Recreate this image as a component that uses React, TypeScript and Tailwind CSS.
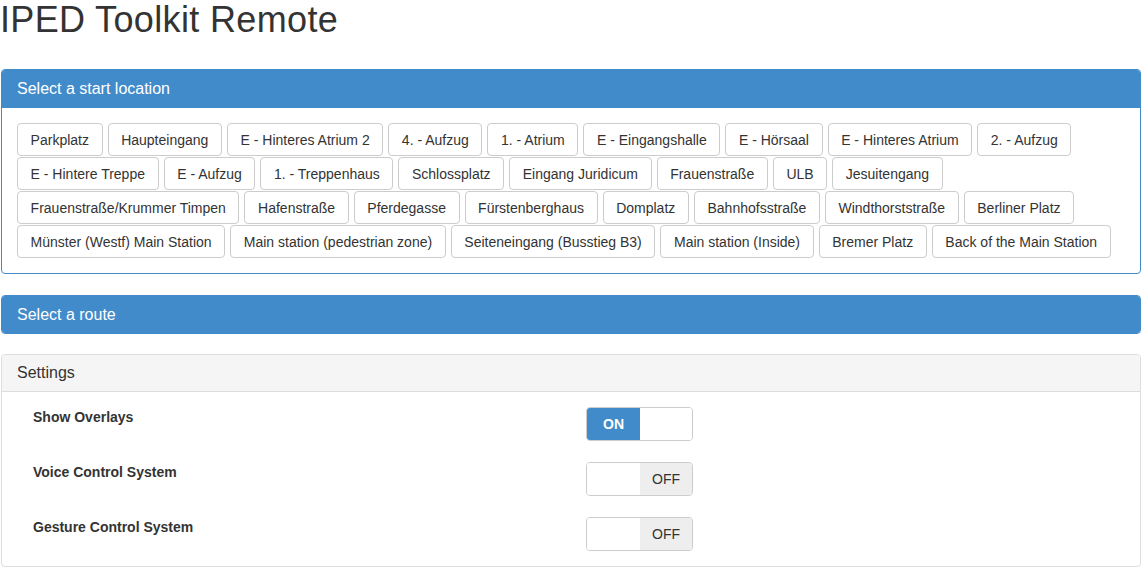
import React from "react";

const locations = [
  "Parkplatz",
  "Haupteingang",
  "E - Hinteres Atrium 2",
  "4. - Aufzug",
  "1. - Atrium",
  "E - Eingangshalle",
  "E - Hörsaal",
  "E - Hinteres Atrium",
  "2. - Aufzug",
  "E - Hintere Treppe",
  "E - Aufzug",
  "1. - Treppenhaus",
  "Schlossplatz",
  "Eingang Juridicum",
  "Frauenstraße",
  "ULB",
  "Jesuitengang",
  "Frauenstraße/Krummer Timpen",
  "Hafenstraße",
  "Pferdegasse",
  "Fürstenberghaus",
  "Domplatz",
  "Bahnhofsstraße",
  "Windthorststraße",
  "Berliner Platz",
  "Münster (Westf) Main Station",
  "Main station (pedestrian zone)",
  "Seiteneingang (Busstieg B3)",
  "Main station (Inside)",
  "Bremer Platz",
  "Back of the Main Station",
];

function Toggle({ on }: { on: boolean }) {
  return (
    <div className="flex w-[107px] h-[34px] border border-[#ccc] rounded-[4px] overflow-hidden bg-white text-[14px] leading-[20px]">
      {on ? (
        <>
          <span className="w-[53px] flex items-center justify-center bg-[#428bca] text-white font-bold">
            ON
          </span>
          <span className="flex-1 bg-white" />
        </>
      ) : (
        <>
          <span className="w-[53px] bg-white" />
          <span className="flex-1 flex items-center justify-center bg-[#eeeeee] text-[#333]">
            OFF
          </span>
        </>
      )}
    </div>
  );
}

export default function App() {
  const settings: [string, boolean][] = [
    ["Show Overlays", true],
    ["Voice Control System", false],
    ["Gesture Control System", false],
  ];
  return (
    <div className="w-[1144px] min-h-[573px] bg-white text-[#333] font-['Liberation_Sans',Arial,sans-serif]">
      <h1 className="text-[36px] leading-[40px] tracking-[0.35px] font-normal text-[#333] m-0">
        IPED Toolkit Remote
      </h1>

      <div className="ml-[1px] w-[1140px] mt-[29px] flex flex-col">
        {/* Start location panel */}
        <div className="border border-[#428bca] rounded-[4px] overflow-hidden">
          <div className="h-[38px] bg-[#428bca] border-b border-[#428bca] px-[15px] flex items-center text-white text-[16px] leading-[18px]">
            Select a start location
          </div>
          <div className="p-[15px] flex flex-wrap gap-x-[5px] gap-y-[1px]">
            {locations.map((l) => (
              <button
                key={l}
                className="h-[33px] px-[12.6px] border border-[#ccc] rounded-[4px] bg-white text-[14px] leading-[20px] text-[#333] whitespace-nowrap"
              >
                {l}
              </button>
            ))}
          </div>
        </div>

        {/* Route panel */}
        <div className="mt-[21px] border border-[#428bca] rounded-[4px] overflow-hidden">
          <div className="h-[37px] bg-[#428bca] px-[15px] flex items-center text-white text-[16px] leading-[18px]">
            Select a route
          </div>
        </div>

        {/* Settings panel */}
        <div className="mt-[20px] border border-[#ddd] rounded-[4px] overflow-hidden">
          <div className="h-[37px] bg-[#f5f5f5] border-b border-[#ddd] px-[15px] flex items-center text-[#333] text-[16px] leading-[18px]">
            Settings
          </div>
          <div className="px-[15px] py-[15px] flex flex-col gap-[21px]">
            {settings.map(([label, on]) => (
              <div key={label} className="grid grid-cols-2">
                <div className="pl-[16px] pr-[15px] text-[14px] leading-[20px] font-bold text-[#333]">
                  {label}
                </div>
                <div className="px-[15px]">
                  <Toggle on={on} />
                </div>
              </div>
            ))}
          </div>
        </div>
      </div>
    </div>
  );
}
